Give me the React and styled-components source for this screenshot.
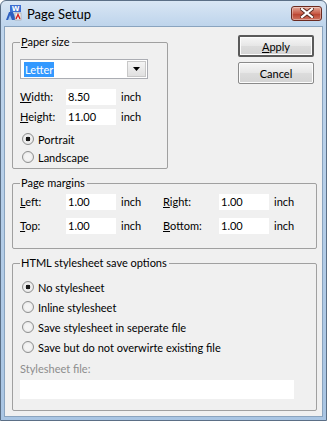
import styled, { createGlobalStyle } from "styled-components";

const GlobalStyle = createGlobalStyle`
  html, body {
    margin: 0;
    padding: 0;
    background: #fff;
  }
  body {
    font-family: Lato, "Noto Sans", sans-serif;
    font-size: 11px;
    color: #000;
  }
`;

export default function App() {
  return (
    <>
      <GlobalStyle />
      <Window>
        <TitleBar>
          <AppIcon />
          <Title>Page Setup</Title>
          <CloseButton>
            <svg width="14" height="10" viewBox="0 0 14 10">
              <path d="M2 1 L12 9 M12 1 L2 9" stroke="#5a2a22" strokeWidth="4" strokeLinecap="square" />
              <path d="M2 1 L12 9 M12 1 L2 9" stroke="#fff" strokeWidth="2.2" strokeLinecap="square" />
            </svg>
          </CloseButton>
        </TitleBar>
        <Client>
          <TopRow>
            <Group $width={156} $height={134}>
              <Legend><U>P</U>aper size</Legend>
              <Select>
                <SelectText>
                  <Selected>Letter</Selected>
                </SelectText>
                <DropButton>
                  <svg width="7" height="4" viewBox="0 0 7 4">
                    <path d="M0 0 H7 L3.5 4 Z" fill="#000" />
                  </svg>
                </DropButton>
              </Select>
              <FieldRow $top={9}>
                <Label $w={46}><U>W</U>idth:</Label>
                <Input>8.50</Input>
                <Unit>inch</Unit>
              </FieldRow>
              <FieldRow $top={3}>
                <Label $w={46}><U>H</U>eight:</Label>
                <Input>11.00</Input>
                <Unit>inch</Unit>
              </FieldRow>
              <RadioList $gap={4} $top={7}>
                <RadioRow>
                  <Radio $checked />
                  <span>Portrait</span>
                </RadioRow>
                <RadioRow>
                  <Radio />
                  <span>Landscape</span>
                </RadioRow>
              </RadioList>
            </Group>
            <Buttons>
              <Button $default><U>A</U>pply</Button>
              <Button>Cancel</Button>
            </Buttons>
          </TopRow>
          <Group $width={305} $height={73}>
            <Legend>Page margins</Legend>
            <MarginGrid>
              <FieldRow>
                <Label $w={46}><U>L</U>eft:</Label>
                <Input>1.00</Input>
                <Unit>inch</Unit>
              </FieldRow>
              <FieldRow>
                <Label $w={56}><U>R</U>ight:</Label>
                <Input>1.00</Input>
                <Unit>inch</Unit>
              </FieldRow>
              <FieldRow>
                <Label $w={46}><U>T</U>op:</Label>
                <Input>1.00</Input>
                <Unit>inch</Unit>
              </FieldRow>
              <FieldRow>
                <Label $w={56}><U>B</U>ottom:</Label>
                <Input>1.00</Input>
                <Unit>inch</Unit>
              </FieldRow>
            </MarginGrid>
          </Group>
          <Group $width={305} $height={155}>
            <Legend>HTML stylesheet save options</Legend>
            <RadioList $gap={6} $top={10}>
              <RadioRow>
                <Radio $checked />
                <span>No stylesheet</span>
              </RadioRow>
              <RadioRow>
                <Radio />
                <span>Inline stylesheet</span>
              </RadioRow>
              <RadioRow>
                <Radio />
                <span>Save stylesheet in seperate file</span>
              </RadioRow>
              <RadioRow>
                <Radio />
                <span>Save but do not overwirte existing file</span>
              </RadioRow>
            </RadioList>
            <DisabledLabel>Stylesheet file:</DisabledLabel>
            <WideInput />
          </Group>
        </Client>
      </Window>
    </>
  );
}

function AppIcon() {
  return (
    <svg width="17" height="16" viewBox="0 0 17 16" style={{ flex: "none" }}>
      <rect x="5" y="0" width="11" height="7" fill="#3d6fd1" />
      <text x="10.5" y="6.3" fontSize="7" fontWeight="bold" fill="#fff" textAnchor="middle" fontFamily="DejaVu Sans">W</text>
      <path d="M1 15 L4 7 L8 7 L11 15 Z" fill="#2d5fbf" />
      <path d="M3 15 L5 10 L7 15 Z" fill="#9ec3f0" />
      <rect x="10" y="8" width="6" height="7" fill="#f4f4f4" stroke="#999" strokeWidth="0.6" />
      <path d="M11 14 L13 9.5 L15 14" stroke="#d32020" strokeWidth="1.4" fill="none" />
    </svg>
  );
}

const Window = styled.div`
  width: 327px;
  height: 421px;
  box-sizing: border-box;
  border: 1px solid #5b6f86;
  border-radius: 6px 6px 0 0;
  background: linear-gradient(#d9e6f4 0px, #bfd5ec 24px, #a9c5e3 100%);
  display: flex;
  flex-direction: column;
  overflow: hidden;
`;

const TitleBar = styled.div`
  height: 24px;
  display: flex;
  align-items: center;
  padding: 0 4px 0 4px;
  gap: 5px;
`;

const Title = styled.div`
  flex: 1;
  font-family: Lato, "Noto Sans", sans-serif;
  font-size: 13px;
  color: #000;
  padding-top: 1px;
`;

const CloseButton = styled.div`
  width: 31px;
  height: 15px;
  margin-top: 0;
  box-sizing: border-box;
  border: 1px solid #6b2a20;
  border-radius: 3px;
  background: linear-gradient(#e3a99a, #c95c48 50%, #b8402c 51%, #cf7360);
  display: flex;
  align-items: center;
  justify-content: center;
  box-shadow: inset 0 0 0 1px rgba(255, 255, 255, 0.35);
`;

const Client = styled.div`
  flex: 1;
  margin: 1px 3px 3px 3px;
  background: #f0f0f0;
  border: 1px solid #8aa4bf;
  padding: 8px 7px 0 7px;
  display: flex;
  flex-direction: column;
  gap: 7px;
`;

const TopRow = styled.div`
  display: flex;
  justify-content: space-between;
  align-items: flex-start;
`;

const Group = styled.fieldset`
  width: ${(p) => p.$width}px;
  height: ${(p) => p.$height}px;
  box-sizing: border-box;
  margin: 0;
  padding: 0 7px;
  border: 1px solid #a0a0a0;
  border-radius: 2px;
  min-width: 0;
`;

const Legend = styled.legend`
  padding: 0 2px 0 1px;
  line-height: 14px;
  margin-left: 0;
`;

const U = styled.span`
  text-decoration: underline;
`;

const Select = styled.div`
  margin-top: 10px;
  width: 128px;
  height: 20px;
  box-sizing: border-box;
  border: 1px solid #abadb3;
  background: #fff;
  display: flex;
  align-items: stretch;
`;

const SelectText = styled.div`
  flex: 1;
  display: flex;
  align-items: center;
  padding-left: 3px;
`;

const Selected = styled.span`
  background: #3399ff;
  color: #fff;
  padding: 0 1px;
  line-height: 15px;
`;

const DropButton = styled.div`
  width: 17px;
  margin: 1px;
  border: 1px solid #c8c8c8;
  background: linear-gradient(#f4f4f4, #e0e0e0);
  display: flex;
  align-items: center;
  justify-content: center;
`;

const FieldRow = styled.div`
  display: flex;
  align-items: center;
  height: 17px;
  margin-top: ${(p) => p.$top || 0}px;
`;

const Label = styled.span`
  width: ${(p) => p.$w}px;
  flex: none;
`;

const Input = styled.div`
  width: 50px;
  height: 16px;
  background: #fff;
  padding-left: 2px;
  box-sizing: border-box;
  line-height: 16px;
  flex: none;
`;

const Unit = styled.span`
  margin-left: 5px;
`;

const RadioList = styled.div`
  display: flex;
  flex-direction: column;
  gap: ${(p) => p.$gap}px;
  margin-top: ${(p) => p.$top}px;
`;

const RadioRow = styled.div`
  display: flex;
  align-items: center;
  gap: 4px;
  height: 14px;
  padding-left: 2px;
`;

const Radio = styled.span`
  width: 10px;
  height: 10px;
  border-radius: 50%;
  border: 1px solid #8e8f8f;
  background: ${(p) =>
    p.$checked
      ? "radial-gradient(circle, #1a1a1a 0 2.2px, #f4f4f4 2.6px, #dcdcdc 100%)"
      : "radial-gradient(circle, #f4f4f4 0 40%, #dcdcdc 100%)"};
  flex: none;
`;

const Buttons = styled.div`
  display: flex;
  flex-direction: column;
  gap: 5px;
  margin-right: 1px;
`;

const Button = styled.div`
  width: 76px;
  height: 22px;
  box-sizing: border-box;
  border: ${(p) => (p.$default ? "2px solid #5a5a5a" : "1px solid #8a8a8a")};
  background: linear-gradient(#f6f6f6, #e6e6e6 50%, #dcdcdc 51%, #d4d4d4);
  border-radius: 2px;
  display: flex;
  align-items: center;
  justify-content: center;
  box-shadow: inset 0 0 0 1px #fcfcfc;
`;

const MarginGrid = styled.div`
  display: grid;
  grid-template-columns: 143px 1fr;
  row-gap: 7px;
  margin-top: 3px;
`;

const DisabledLabel = styled.div`
  color: #8d8d8d;
  margin-top: 7px;
  line-height: 16px;
`;

const WideInput = styled.div`
  width: 274px;
  height: 19px;
  background: #fff;
  margin-top: 3px;
`;
